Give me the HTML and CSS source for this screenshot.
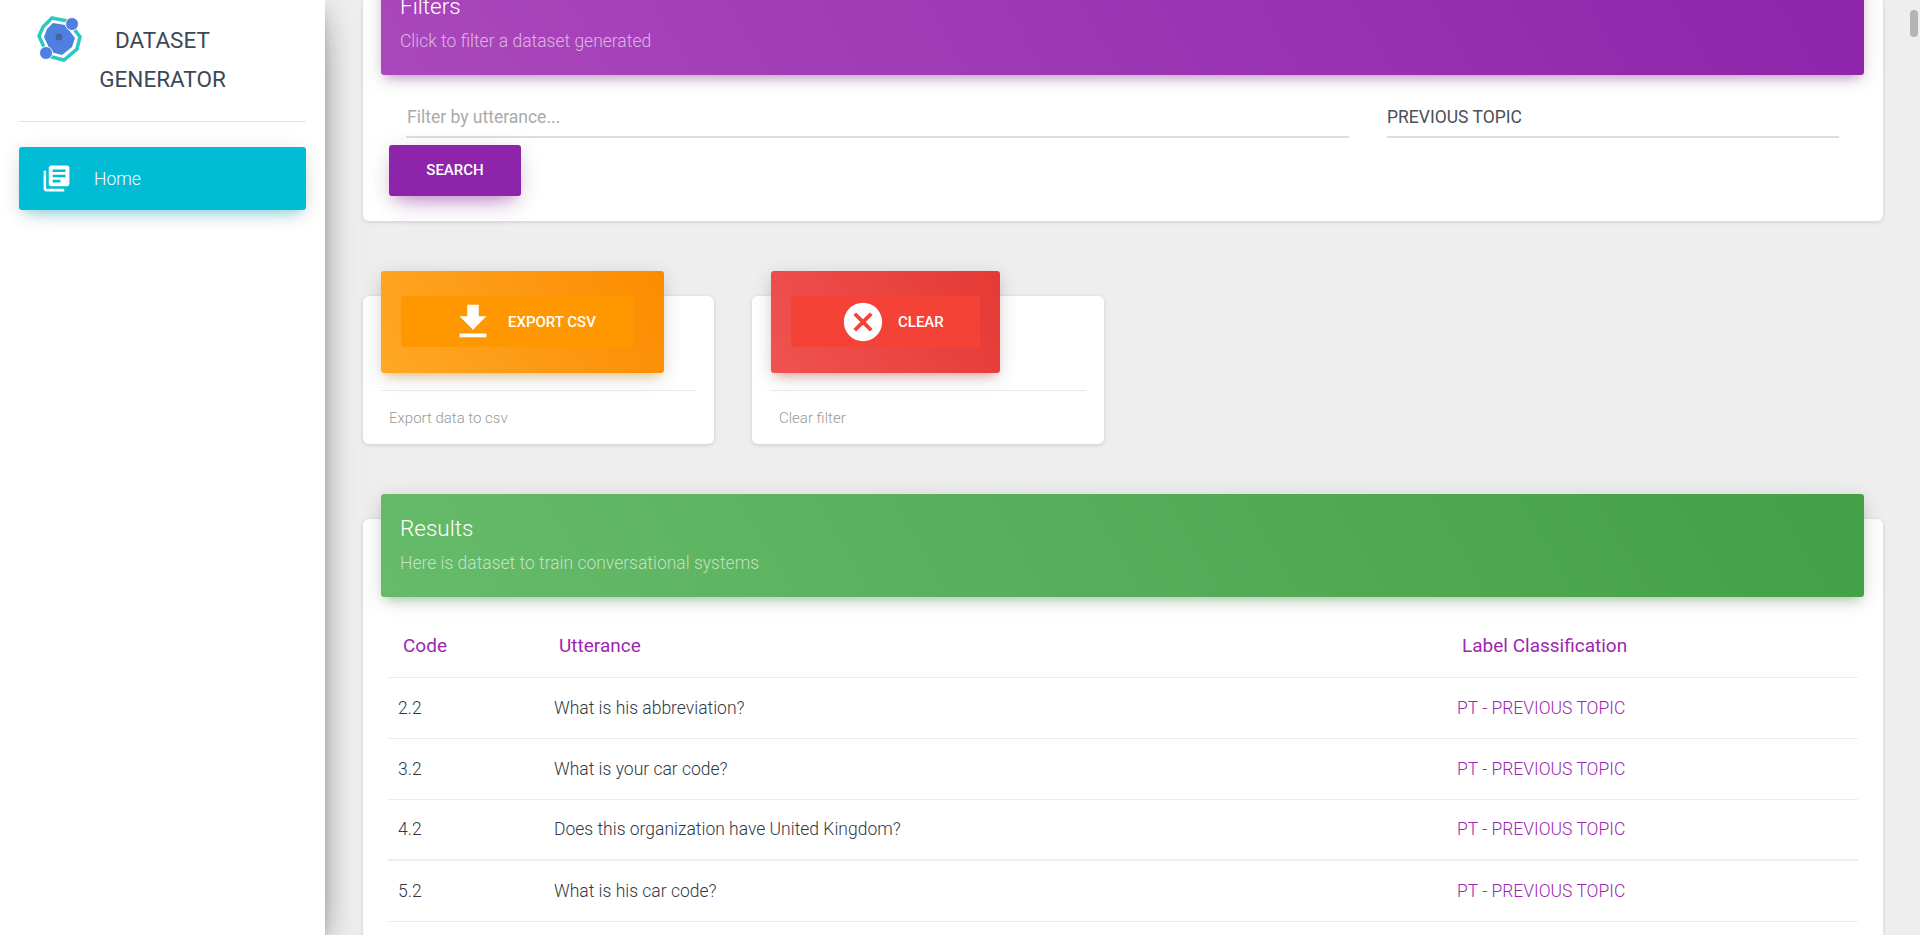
FILE: index.html
```html
<!DOCTYPE html>
<html lang="en">
<head>
    <meta charset="UTF-8">
    <meta name="viewport" content="width=device-width, initial-scale=1.0">
    <title>Dataset Generator</title>
    <link rel="stylesheet" href="styles.css">
</head>
<body>
    <div class="layout">
        <aside class="sidebar">
            <div class="brand">
                <svg class="brand-logo" viewBox="0 0 48 48">
                    <polygon points="17,3 33,6 45,22 42,34 29,45 13,41 4,21 8,12" fill="none" stroke="#2ac9c4" stroke-width="3.5"/>
                    <polygon points="18,8 30,10 40,23 37,32 27,40 16,37 9,22 12,14" fill="#4f7fe0"/>
                    <circle cx="24" cy="22" r="3.5" fill="#44639f"/>
                    <circle cx="37" cy="9" r="6.5" fill="#4f7fe0" stroke="#fff" stroke-width="1"/>
                    <circle cx="11" cy="38" r="6.5" fill="#4f7fe0" stroke="#fff" stroke-width="1"/>
                </svg>
                <div class="brand-name">DATASET GENERATOR</div>
            </div>
            <a class="nav-item" href="#">
                <svg class="nav-icon" viewBox="0 0 24 24"><path d="M4 6H2v14c0 1.1.9 2 2 2h14v-2H4V6zm16-4H8c-1.1 0-2 .9-2 2v12c0 1.1.9 2 2 2h12c1.1 0 2-.9 2-2V4c0-1.1-.9-2-2-2zm-1 9H9V9h10v2zm-4 4H9v-2h6v2zm4-8H9V5h10v2z"/></svg>
                <span>Home</span>
            </a>
        </aside>

        <main class="content">
            <section class="card filters-card">
                <div class="card-header header-primary">
                    <h4 class="card-title">Filters</h4>
                    <p class="card-category">Click to filter a dataset generated</p>
                </div>
                <div class="filter-row">
                    <input class="field" type="text" placeholder="Filter by utterance...">
                    <select class="field field-select">
                        <option>PREVIOUS TOPIC</option>
                    </select>
                </div>
                <button class="btn-search">Search</button>
            </section>

            <div class="action-row">
                <section class="card action-card">
                    <div class="action-header header-warning">
                        <button class="btn-action btn-export">
                            <svg class="action-icon" viewBox="0 0 24 24"><path d="M19 9h-4V3H9v6H5l7 7 7-7zM5 18v2h14v-2H5z"/></svg>
                            <span>Export CSV</span>
                        </button>
                    </div>
                    <div class="action-footer">Export data to csv</div>
                </section>
                <section class="card action-card">
                    <div class="action-header header-danger">
                        <button class="btn-action btn-clear">
                            <svg class="action-icon" viewBox="0 0 24 24"><path d="M12 2C6.47 2 2 6.47 2 12s4.47 10 10 10 10-4.47 10-10S17.53 2 12 2zm5 13.59L15.59 17 12 13.41 8.41 17 7 15.59 10.59 12 7 8.41 8.41 7 12 10.59 15.59 7 17 8.41 13.41 12 17 15.59z"/></svg>
                            <span>Clear</span>
                        </button>
                    </div>
                    <div class="action-footer">Clear filter</div>
                </section>
            </div>

            <section class="card results-card">
                <div class="card-header header-success">
                    <h4 class="card-title">Results</h4>
                    <p class="card-category">Here is dataset to train conversational systems</p>
                </div>
                <table class="results-table">
                    <thead>
                        <tr>
                            <th class="col-code">Code</th>
                            <th class="col-utterance">Utterance</th>
                            <th>Label Classification</th>
                        </tr>
                    </thead>
                    <tbody>
                        <tr>
                            <td>2.2</td>
                            <td>What is his abbreviation?</td>
                            <td class="label-cell">PT - PREVIOUS TOPIC</td>
                        </tr>
                        <tr>
                            <td>3.2</td>
                            <td>What is your car code?</td>
                            <td class="label-cell">PT - PREVIOUS TOPIC</td>
                        </tr>
                        <tr class="row-heavy">
                            <td>4.2</td>
                            <td>Does this organization have United Kingdom?</td>
                            <td class="label-cell">PT - PREVIOUS TOPIC</td>
                        </tr>
                        <tr>
                            <td>5.2</td>
                            <td>What is his car code?</td>
                            <td class="label-cell">PT - PREVIOUS TOPIC</td>
                        </tr>
                    </tbody>
                </table>
            </section>
        </main>

        <div class="scroll-thumb"></div>
    </div>
</body>
</html>
```
FILE: styles.css
```css
* {
    box-sizing: border-box;
}

body {
    margin: 0;
    background: #eee;
    font-family: Roboto, "Liberation Sans", sans-serif;
    color: #3c4858;
}

.layout {
    position: relative;
    display: flex;
    height: 100vh;
    overflow: hidden;
}

/* sidebar */
.sidebar {
    position: relative;
    z-index: 2;
    flex: 0 0 325px;
    padding: 0 19px;
    background: #fff;
    box-shadow: 0 16px 38px -12px rgba(0, 0, 0, 0.56), 0 4px 25px 0 rgba(0, 0, 0, 0.12), 0 8px 10px -5px rgba(0, 0, 0, 0.2);
}

.brand {
    display: flex;
    align-items: flex-start;
    height: 122px;
    padding: 15px 64px 0 16px;
    border-bottom: 1px solid #e4e4e4;
}

.brand-logo {
    flex: 0 0 48px;
    width: 48px;
    height: 48px;
}

.brand-name {
    flex: 1;
    margin-top: 6px;
    font-size: 22.5px;
    line-height: 39px;
    text-align: center;
    color: #3c4858;
}

.nav-item {
    display: flex;
    align-items: center;
    gap: 22px;
    height: 63px;
    margin-top: 25px;
    padding-left: 22px;
    border-radius: 3px;
    background: #00bcd4;
    box-shadow: 0 12px 20px -10px rgba(0, 188, 212, 0.28), 0 4px 20px 0 rgba(0, 0, 0, 0.12), 0 7px 8px -5px rgba(0, 188, 212, 0.2);
    color: #fff;
    font-size: 17.5px;
    font-weight: 300;
    text-decoration: none;
}

.nav-icon {
    width: 31px;
    height: 31px;
    fill: #fff;
}

/* main column */
.content {
    flex: 1;
    min-width: 0;
    margin-top: -3px;
    padding: 0 37px 0 38px;
}

.card {
    background: #fff;
    border-radius: 6px;
    box-shadow: 0 1px 4px 0 rgba(0, 0, 0, 0.14);
}

.card-header {
    height: 103px;
    margin: -25px 19px 0 18px;
    padding: 19px 19px 0;
    border-radius: 3px;
    color: #fff;
}

.card-title {
    margin: 0;
    font-size: 22.5px;
    font-weight: 300;
    line-height: 30px;
}

.card-category {
    margin: 7px 0 0;
    font-size: 17.5px;
    font-weight: 300;
    line-height: 26px;
    color: rgba(255, 255, 255, 0.62);
}

.header-primary {
    background: linear-gradient(60deg, #ab47bc, #8e24aa);
    box-shadow: 0 4px 20px 0 rgba(0, 0, 0, 0.14), 0 7px 10px -5px rgba(156, 39, 176, 0.4);
}

.header-success {
    background: linear-gradient(60deg, #66bb6a, #43a047);
    box-shadow: 0 4px 20px 0 rgba(0, 0, 0, 0.14), 0 7px 10px -5px rgba(76, 175, 80, 0.4);
}

.header-warning {
    background: linear-gradient(60deg, #ffa726, #fb8c00);
    box-shadow: 0 4px 20px 0 rgba(0, 0, 0, 0.14), 0 7px 10px -5px rgba(255, 152, 0, 0.4);
}

.header-danger {
    background: linear-gradient(60deg, #ef5350, #e53935);
    box-shadow: 0 4px 20px 0 rgba(0, 0, 0, 0.14), 0 7px 10px -5px rgba(244, 67, 54, 0.4);
}

/* filters */
.filters-card {
    height: 224px;
    padding-top: 0.02px;
}

.filter-row {
    display: flex;
    gap: 38px;
    margin: 27px 44px 0 43px;
}

.field {
    height: 36px;
    padding: 0 0 4px 0;
    border: 0;
    border-bottom: 2px solid #dcdcdc;
    border-radius: 0;
    background: none;
    outline: none;
    font-family: inherit;
    font-size: 17.5px;
    color: #495057;
}

.field::placeholder {
    color: #aaa;
    opacity: 1;
}

.filter-row input {
    flex: 0 0 943px;
    padding-left: 1px;
}

.field-select {
    flex: 1;
    appearance: none;
    -webkit-appearance: none;
}

.btn-search {
    display: block;
    width: 132px;
    height: 51px;
    margin: 7px 0 0 26px;
    padding: 0 0 2px;
    border: none;
    border-radius: 3px;
    background: #8e24aa;
    box-shadow: 0 14px 26px -12px rgba(156, 39, 176, 0.42), 0 4px 23px 0 rgba(0, 0, 0, 0.12), 0 8px 10px -5px rgba(156, 39, 176, 0.2);
    color: #fff;
    font-family: inherit;
    font-size: 15px;
    font-weight: 500;
    text-transform: uppercase;
}

/* export and clear cards */
.action-row {
    display: flex;
    gap: 38px;
    margin-top: 75px;
}

.action-card {
    flex: 0 0 351px;
    height: 148px;
    padding: 0.02px 18px 0;
}

.action-card:last-child {
    flex-basis: 352px;
    padding-left: 19px;
}

.action-header {
    display: flex;
    width: fit-content;
    height: 102px;
    margin-top: -25px;
    padding: 25px 31px 0 20px;
    border-radius: 3px;
}

.header-danger.action-header {
    padding-right: 20px;
}

.btn-action {
    display: flex;
    align-items: center;
    gap: 12px;
    height: 51px;
    border: none;
    border-radius: 3px;
    color: #fff;
    font-family: inherit;
    font-size: 15px;
    font-weight: 500;
    text-transform: uppercase;
}

.btn-export {
    padding: 0 37px 0 49px;
    background: #ff9800;
}

.btn-clear {
    padding: 0 36px 0 49px;
    background: #f44336;
}

.action-icon {
    width: 46px;
    height: 46px;
    fill: #fff;
}

.action-footer {
    margin-top: 17px;
    padding: 17px 8px 0;
    border-top: 1px solid #e8e8e8;
    font-size: 15px;
    font-weight: 300;
    line-height: 20px;
    color: #999;
}

/* results table */
.results-card {
    height: 600px;
    margin-top: 75px;
    padding-top: 0.02px;
}

.results-table {
    width: 1470px;
    margin: 0 25px;
    border-collapse: collapse;
    table-layout: fixed;
}

.results-table th {
    height: 80px;
    padding: 18px 15px 0;
    border-bottom: 1px solid #eee;
    font-size: 19px;
    font-weight: 400;
    text-align: left;
    color: #9c27b0;
}

.results-table .col-code {
    width: 156px;
}

.results-table .col-utterance {
    width: 903px;
}

.results-table td {
    height: 61px;
    padding: 0 10px;
    border-bottom: 1px solid #eee;
    font-size: 17.5px;
    font-weight: 300;
    color: #2f3844;
}

.results-table .label-cell {
    color: #9c27b0;
}

.results-table .row-heavy td {
    border-bottom-width: 2px;
}

.scroll-thumb {
    position: absolute;
    top: 10px;
    right: 2px;
    width: 8px;
    height: 27px;
    border-radius: 4px;
    background: #b4b4b4;
}
```
